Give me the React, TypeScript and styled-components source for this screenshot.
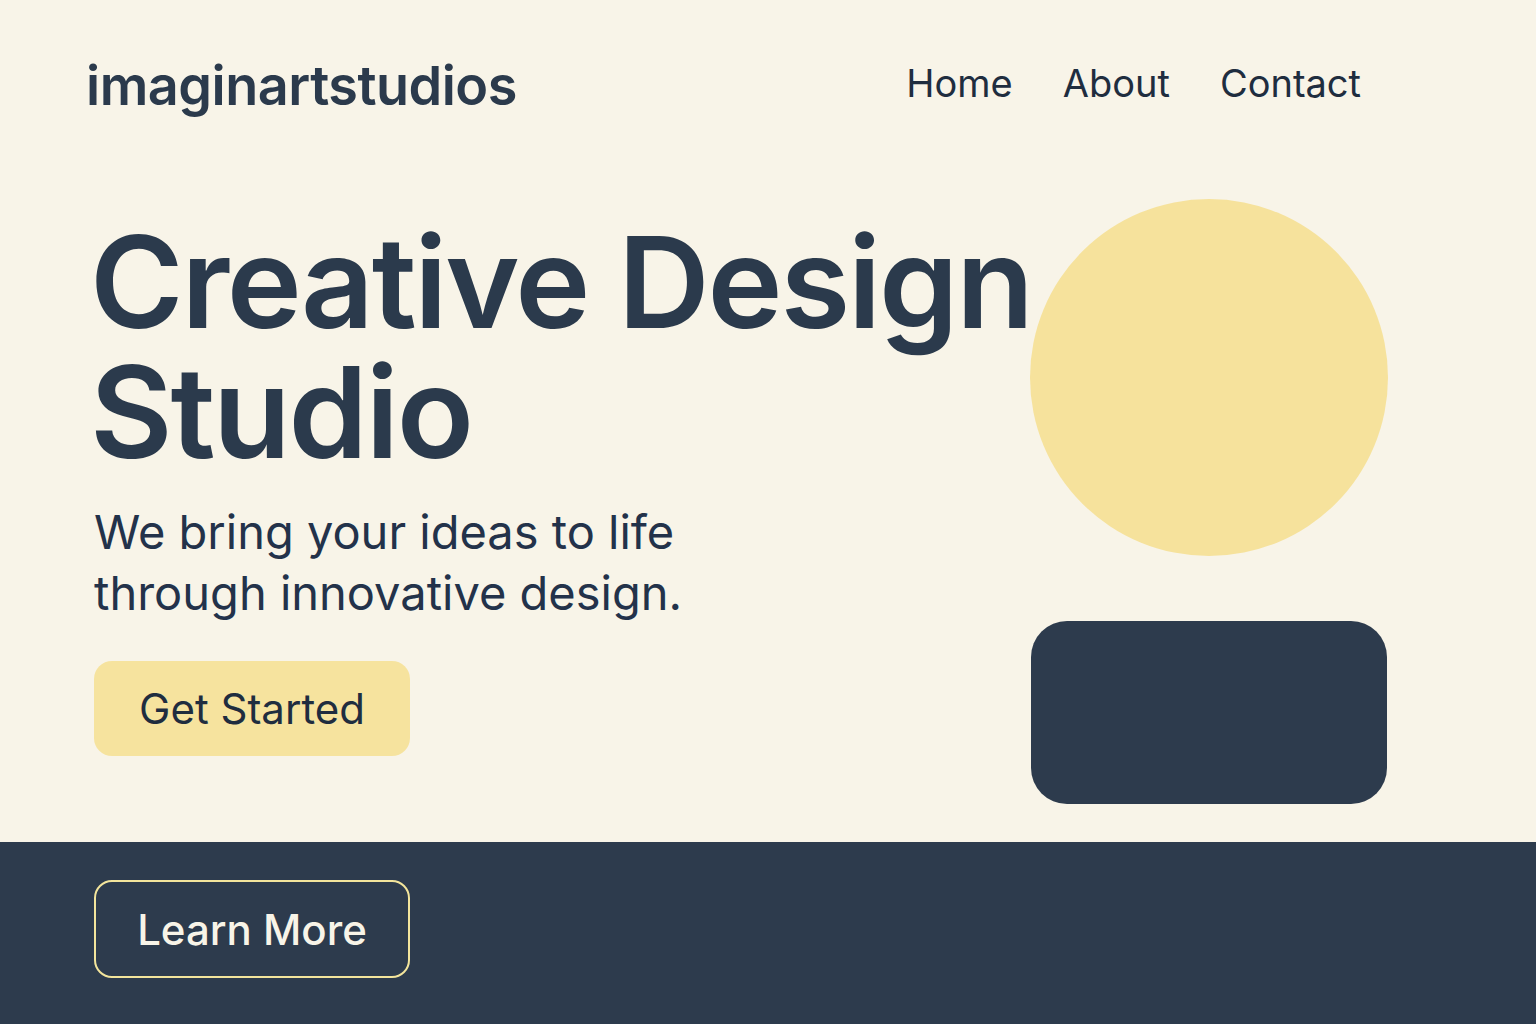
import React from "react";
import styled, { createGlobalStyle } from "styled-components";

const GlobalStyle = createGlobalStyle`
  html, body { margin: 0; padding: 0; background: #f8f4e8; }
  body { font-family: Inter, "Noto Sans", "Liberation Sans", sans-serif; color: #2b3a4c; }
  * { box-sizing: border-box; }
`;

const Page = styled.div`
  width: 1536px;
  height: 1024px;
  display: flex;
  flex-direction: column;
  background: #f8f4e8;
  overflow: hidden;
`;

const Header = styled.header`
  height: 170px;
  flex-shrink: 0;
  display: flex;
  align-items: flex-start;
  justify-content: space-between;
  padding: 53px 175px 0 86px;
`;

const Logo = styled.div`
  font-size: 54px;
  font-weight: 600;
  letter-spacing: -0.5px;
  color: #2b3a4c;
`;

const Nav = styled.nav`
  display: flex;
  gap: 50px;
  padding-top: 7px;
`;

const NavLink = styled.a`
  font-size: 38px;
  font-weight: 400;
  color: #1f2d3f;
  text-decoration: none;
`;

const Hero = styled.main`
  flex: 1;
  min-height: 0;
  display: flex;
  justify-content: space-between;
  padding: 0 148px 0 90px;
`;

const Left = styled.div`
  flex: 1;
  min-width: 0;
  display: flex;
  flex-direction: column;
  align-items: flex-start;
`;

const Headline = styled.h1`
  margin: 47px 0 0;
  font-size: 127px;
  line-height: 130px;
  font-weight: 600;
  letter-spacing: -2.2px;
  white-space: nowrap;
  color: #2b3a4c;
`;

const Sub = styled.p`
  margin: 24px 0 0 4px;
  font-size: 47px;
  line-height: 61px;
  font-weight: 400;
  white-space: nowrap;
  color: #23324a;
`;

const Primary = styled.button`
  margin: 38px 0 0 4px;
  width: 316px;
  height: 95px;
  border: none;
  border-radius: 18px;
  background: #f6e39e;
  color: #1f2d3f;
  font-family: inherit;
  font-size: 42px;
  font-weight: 400;
`;

const Right = styled.div`
  flex-shrink: 0;
  padding-top: 29px;
  display: flex;
  flex-direction: column;
  align-items: center;
  gap: 65px;
`;

const Circle = styled.div`
  width: 358px;
  height: 357px;
  border-radius: 50%;
  background: #f6e29c;
`;

const Block = styled.div`
  width: 356px;
  height: 183px;
  border-radius: 36px;
  background: #2d3b4d;
`;

const Footer = styled.footer`
  height: 182px;
  flex-shrink: 0;
  background: #2d3b4d;
  display: flex;
  align-items: flex-start;
  padding: 38px 0 0 94px;
`;

const Outline = styled.button`
  width: 316px;
  height: 98px;
  border: 2px solid #f3e59c;
  border-radius: 18px;
  background: transparent;
  color: #f8f4e8;
  font-family: inherit;
  font-size: 42px;
  font-weight: 500;
`;

export default function App() {
  return (
    <Page>
      <GlobalStyle />
      <Header>
        <Logo>imaginartstudios</Logo>
        <Nav>
          <NavLink>Home</NavLink>
          <NavLink>About</NavLink>
          <NavLink>Contact</NavLink>
        </Nav>
      </Header>
      <Hero>
        <Left>
          <Headline>
            Creative Design
            <br />
            Studio
          </Headline>
          <Sub>
            We bring your ideas to life
            <br />
            through innovative design.
          </Sub>
          <Primary>Get Started</Primary>
        </Left>
        <Right>
          <Circle />
          <Block />
        </Right>
      </Hero>
      <Footer>
        <Outline>Learn More</Outline>
      </Footer>
    </Page>
  );
}
